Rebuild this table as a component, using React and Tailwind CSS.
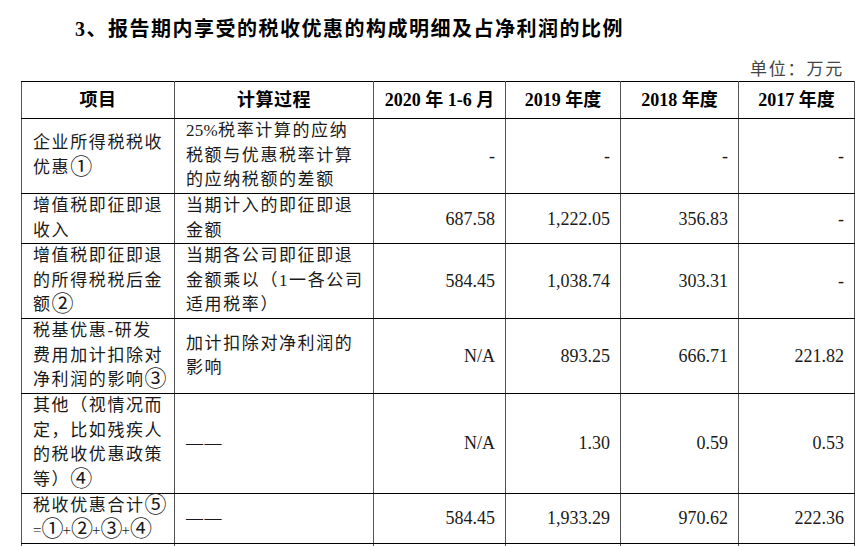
import React from "react";

const rows = [
  {
    h: "h-[75px]",
    a: ["企业所得税税收", "优惠①"],
    b: ["25%税率计算的应纳", "税额与优惠税率计算", "的应纳税额的差额"],
    v: ["-", "-", "-", "-"],
  },
  {
    h: "h-[50px]",
    a: ["增值税即征即退", "收入"],
    b: ["当期计入的即征即退", "金额"],
    v: ["687.58", "1,222.05", "356.83", "-"],
  },
  {
    h: "h-[75px]",
    a: ["增值税即征即退", "的所得税税后金", "额②"],
    b: ["当期各公司即征即退", "金额乘以（1一各公司", "适用税率）"],
    v: ["584.45", "1,038.74", "303.31", "-"],
  },
  {
    h: "h-[75px]",
    a: ["税基优惠-研发", "费用加计扣除对", "净利润的影响③"],
    b: ["加计扣除对净利润的", "影响"],
    v: ["N/A", "893.25", "666.71", "221.82"],
  },
  {
    h: "h-[99px]",
    a: ["其他（视情况而", "定，比如残疾人", "的税收优惠政策", "等）④"],
    b: ["——"],
    v: ["N/A", "1.30", "0.59", "0.53"],
  },
  {
    h: "h-[50px]",
    a: ["税收优惠合计⑤", "=①+②+③+④"],
    b: ["——"],
    v: ["584.45", "1,933.29", "970.62", "222.36"],
  },
];

const cell =
  "border-y border-y-black border-x border-x-[#555] p-0 align-middle";

function Text({ s }) {
  const tight = s.startsWith("=");
  const parts = s.split(/([①②③④⑤]|25%)/);
  return (
    <span className={tight ? "tracking-[0px]" : ""}>
      {parts.map((p, i) => {
        if (/^[①②③④⑤]$/.test(p))
          return (
            <span
              key={i}
              className={`font-['Noto_Sans_CJK_SC'] text-[22px] leading-[0] align-[-1px] ${
                tight ? "tracking-[-1px]" : "tracking-[-1px]"
              }`}
            >
              {p}
            </span>
          );
        if (p === "25%")
          return (
            <span key={i} className="tracking-[0.3px]">
              {p}
            </span>
          );
        if (tight && p)
          return (
            <span key={i} className="text-[15px]">
              {p}
            </span>
          );
        return <React.Fragment key={i}>{p}</React.Fragment>;
      })}
    </span>
  );
}

function Lines({ lines }) {
  return lines.map((l, i) => (
    <React.Fragment key={i}>
      <Text s={l} />
      {i < lines.length - 1 && <br />}
    </React.Fragment>
  ));
}

export default function App() {
  return (
    <div
      className="w-[866px] h-[546px] overflow-hidden bg-white text-[#1a1a1a]"
      style={{ fontFamily: '"Liberation Serif", "Noto Sans CJK SC", serif' }}
    >
      <div className="h-[58px] flex items-center pl-[75px] pb-[1px]">
        <h1 className="text-[20px] font-bold tracking-[1.5px] text-black leading-none">
          3、报告期内享受的税收优惠的构成明细及占净利润的比例
        </h1>
      </div>
      <div className="h-[23px] w-[854px] flex justify-end items-center pr-[10px]">
        <span className="text-[17px] tracking-[1.8px] text-[#444] leading-none">
          单位：万元
        </span>
      </div>
      <div className="pl-[21px]">
        <table className="table-fixed border-collapse w-[833px]">
          <colgroup>
            <col className="w-[153px]" />
            <col className="w-[199px]" />
            <col className="w-[132px]" />
            <col className="w-[115px]" />
            <col className="w-[118px]" />
            <col className="w-[116px]" />
          </colgroup>
          <thead>
            <tr className="h-[37px]">
              {["项目", "计算过程", "2020 年 1-6 月", "2019 年度", "2018 年度", "2017 年度"].map(
                (t, i) => (
                  <th
                    key={i}
                    className={`${cell} text-center font-bold text-[18px] leading-none text-black ${
                      i < 2 ? "tracking-[0.5px]" : ""
                    }`}
                  >
                    {t}
                  </th>
                )
              )}
            </tr>
          </thead>
          <tbody>
            {rows.map((r, ri) => (
              <tr key={ri} className={r.h}>
                <td
                  className={`${cell} pl-[11px] pr-[2px] text-left text-[17px] tracking-[1.6px] leading-[24.6px] whitespace-nowrap`}
                >
                  <Lines lines={r.a} />
                </td>
                <td
                  className={`${cell} pl-[11px] pr-[4px] text-left text-[17px] tracking-[1.6px] leading-[24.6px] whitespace-nowrap`}
                >
                  <Lines lines={r.b} />
                </td>
                {r.v.map((v, vi) => (
                  <td
                    key={vi}
                    className={`${cell} pr-[10px] text-right text-[18px] leading-none`}
                  >
                    {v}
                  </td>
                ))}
              </tr>
            ))}
            <tr className="h-[40px]">
              {[0, 1, 2, 3, 4, 5].map((i) => (
                <td key={i} className={cell}></td>
              ))}
            </tr>
          </tbody>
        </table>
      </div>
    </div>
  );
}
